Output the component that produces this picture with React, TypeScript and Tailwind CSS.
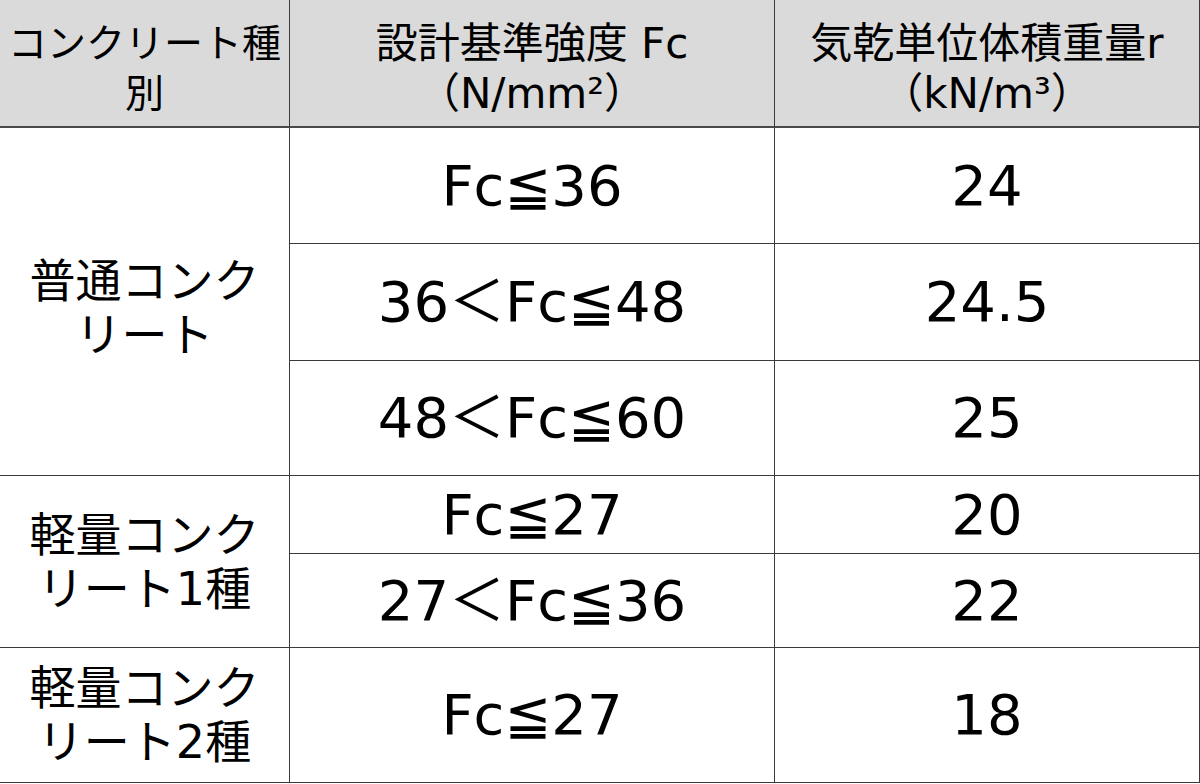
const font = { fontFamily: "'DejaVu Sans', 'Noto Sans CJK JP', sans-serif" };

const rows = [
  { fc: "Fc≦36", w: "24" },
  { fc: "36＜Fc≦48", w: "24.5" },
  { fc: "48＜Fc≦60", w: "25" },
  { fc: "Fc≦27", w: "20" },
  { fc: "27＜Fc≦36", w: "22" },
  { fc: "Fc≦27", w: "18" },
];

// row heights in px, matching the reference grid
const heights = ["h-[116px]", "h-[117px]", "h-[115px]", "h-[78px]", "h-[94px]", "h-[135px]"];

const cell = "flex items-center justify-center text-center border-r border-b border-[#3a3a3a] text-black";
const head = `${cell} bg-[#dadada] border-b-2 border-b-[#4a4a4a] leading-[50px] pt-3`;

export default function App() {
  return (
    <div className="w-[1200px] h-[784px] bg-white overflow-hidden" style={font}>
      <div className="grid grid-cols-[290px_485px_425px] grid-rows-[128px_116px_117px_115px_78px_94px_135px]">
        {/* header */}
        <div className={`${head} text-[39px]`}>
          <div>
            コンクリート種
            <br />別
          </div>
        </div>
        <div className={`${head} text-[42px]`}>
          <div>
            設計基準強度 Fc
            <br />（N/mm²）
          </div>
        </div>
        <div className={`${head} text-[42px]`}>
          <div>
            気乾単位体積重量r
            <br />（kN/m³）
          </div>
        </div>

        {/* concrete type column */}
        <div className={`${cell} row-span-3 text-[46px] leading-[54px] pt-3`}>
          <div>
            普通コンク
            <br />リート
          </div>
        </div>
        <Data fc={rows[0].fc} w={rows[0].w} h={heights[0]} />
        <Data fc={rows[1].fc} w={rows[1].w} h={heights[1]} />
        <Data fc={rows[2].fc} w={rows[2].w} h={heights[2]} />

        <div className={`${cell} row-span-2 text-[46px] leading-[54px]`}>
          <div>
            軽量コンク
            <br />リート1種
          </div>
        </div>
        <Data fc={rows[3].fc} w={rows[3].w} h={heights[3]} />
        <Data fc={rows[4].fc} w={rows[4].w} h={heights[4]} />

        <div className={`${cell} text-[46px] leading-[54px]`}>
          <div>
            軽量コンク
            <br />リート2種
          </div>
        </div>
        <Data fc={rows[5].fc} w={rows[5].w} h={heights[5]} />
      </div>
    </div>
  );
}

function Data({ fc, w, h }: { fc: string; w: string; h: string }) {
  return (
    <>
      <div className={`${cell} ${h} text-[56px] leading-none`}>{fc}</div>
      <div className={`${cell} ${h} text-[56px] leading-none`}>{w}</div>
    </>
  );
}
